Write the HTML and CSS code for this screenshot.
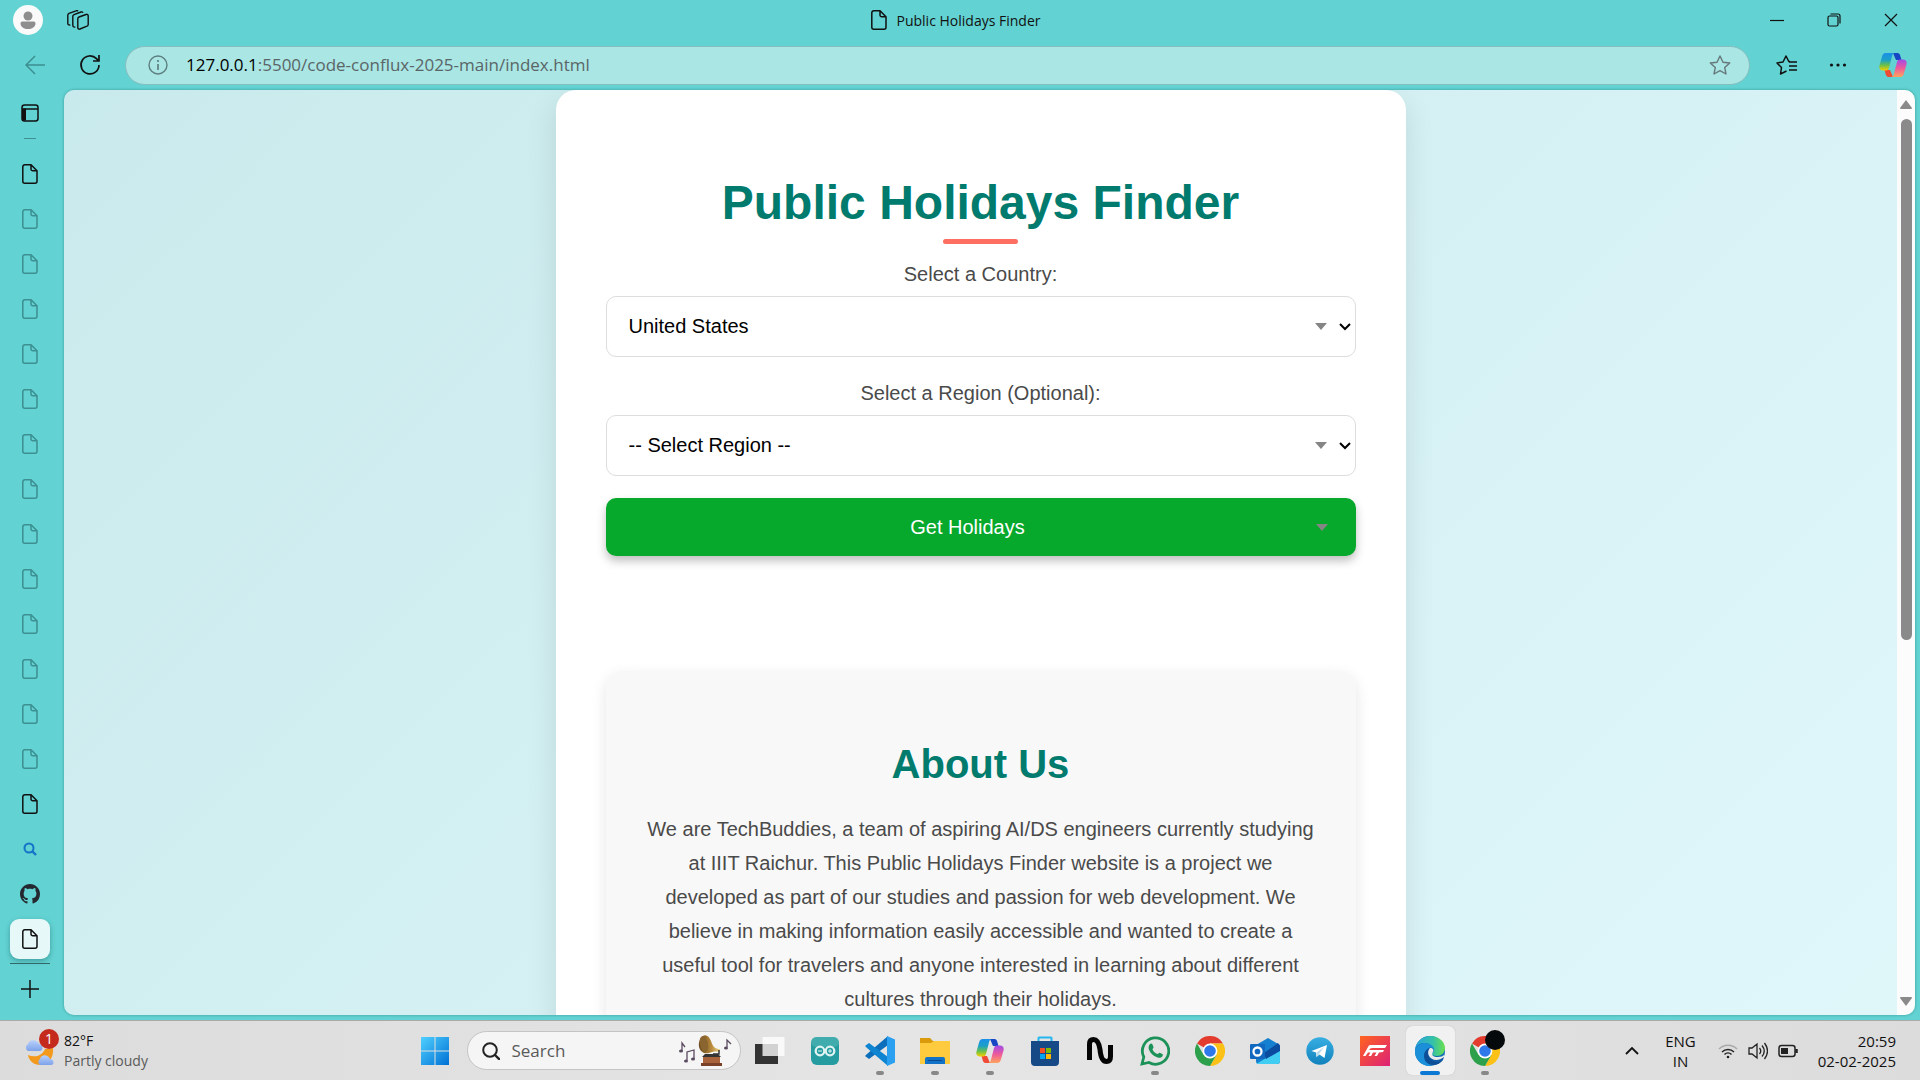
FILE: index.html
```html
<!DOCTYPE html>
<html lang="en">
<head>
<meta charset="utf-8">
<title>Public Holidays Finder</title>
<link rel="stylesheet" href="styles.css">
</head>
<body>
<svg class="defs" aria-hidden="true">
  <defs>
    <symbol id="file" viewBox="0 0 16 20"><path d="M2.8 .8H9l6 6v10.400a2 2 0 0 1-2 2H2.800a2 2 0 0 1-2-2V2.800a2 2 0 0 1 2-2zM9 .8v4.200a1.800 1.800 0 0 0 1.800 1.800H15" fill="none" stroke="currentColor" stroke-width="1.500"/></symbol>
    <linearGradient id="cp1" x1="0" y1="0" x2="0" y2="1"><stop offset="0" stop-color="#1b8fe8"/><stop offset=".4" stop-color="#1ba0c8"/><stop offset=".7" stop-color="#6cc04a"/><stop offset="1" stop-color="#f5d000"/></linearGradient>
    <linearGradient id="cp2" x1="0" y1="0" x2="0" y2="1"><stop offset="0" stop-color="#a04be8"/><stop offset=".5" stop-color="#ee5a9a"/><stop offset="1" stop-color="#ffa45c"/></linearGradient>
    <symbol id="copilot" viewBox="0 0 28 26">
      <path d="M14 1h4.500c1.500 0 2.200 1 2.700 2.500L22.500 8H17z" fill="#1746c4"/>
      <path d="M14 25H9.500c-1.500 0-2.200-1-2.700-2.500L5.500 18H11z" fill="#ee4a35"/>
      <path d="M6.500 1H16c-1.500 0-2.300 1-2.800 2.500L10 16c-.5 1.700-1.500 2.500-3 2.500H4c-3 0-4.300-2.200-3.500-5l2.700-9.500C3.800 2 5 1 6.500 1z" fill="url(#cp1)"/>
      <path d="M21.500 25H12c1.500 0 2.300-1 2.800-2.500L18 10c.5-1.700 1.500-2.500 3-2.500h3c3 0 4.300 2.200 3.500 5L24.800 22c-.6 2-1.800 3-3.300 3z" fill="url(#cp2)"/>
    </symbol>
    <symbol id="chrome" viewBox="0 0 30 30">
      <path d="M15 15 2 7.500A15 15 0 0 1 28 7.500H15z" fill="#e33b2e"/>
      <path d="M15 15l6.500 3.700L15 30A15 15 0 0 0 28 7.500H15z" fill="#fbc116"/>
      <path d="M15 15l6.500 3.700L15 30A15 15 0 0 1 2 7.500l6.500 11.200z" fill="#2da04c"/>
      <circle cx="15" cy="15" r="7.400" fill="#fff"/><circle cx="15" cy="15" r="5.800" fill="#2f78ea"/>
    </symbol>
  </defs>
</svg>

<header class="titlebar">
  <div class="title-left">
    <button class="ghost" aria-label="Profile"><svg width="30" height="30" viewBox="0 0 30 30"><circle cx="15" cy="15" r="15" fill="#fafafa"/><circle cx="15" cy="11" r="4.500" fill="#8e8e8e"/><path d="M9 16.500h12a1.800 1.800 0 0 1 1.500 2c0 3.500-3.500 5.500-7.500 5.500s-7.500-2-7.500-5.500a1.800 1.800 0 0 1 1.500-2z" fill="#8e8e8e"/></svg></button>
    <button class="ghost" aria-label="Workspaces"><svg width="22" height="20" viewBox="0 0 22 20" fill="none" stroke="#111" stroke-width="1.400"><path d="M12 7l7-2.500a1.500 1.500 0 0 1 2.200 1.500v8.500a2 2 0 0 1-1.200 1.700l-7 2.800a1.500 1.500 0 0 1-2.200-1.500V8.800A2 2 0 0 1 12 7z"/><path d="M8.300 17c-1.700.4-2.500-.4-2.500-1.700V6.300A2 2 0 0 1 7 4.600l7-2.600a1.600 1.600 0 0 1 2 .8"/><path d="M3.300 15C1.700 15.300.8 14.500.8 13.300V5A2 2 0 0 1 2 3.300L9 .8a1.700 1.700 0 0 1 2 .4"/></svg></button>
  </div>
  <div class="title"><svg width="16" height="20"><use href="#file"/></svg><span>Public Holidays Finder</span></div>
  <div class="window-buttons">
    <button class="ghost" aria-label="Minimize"><svg width="14" height="14" stroke="#111" stroke-width="1.200"><path d="M0 7.500h14"/></svg></button>
    <button class="ghost" aria-label="Restore"><svg width="14" height="14" fill="none" stroke="#111" stroke-width="1.200"><rect x="1" y="3" width="10" height="10" rx="1.500"/><path d="M3.500 1H11a2 2 0 0 1 2 2v7.500"/></svg></button>
    <button class="ghost" aria-label="Close"><svg width="14" height="14" stroke="#111" stroke-width="1.200"><path d="M1 1l12 12M13 1L1 13"/></svg></button>
  </div>
</header>

<nav class="toolbar">
  <button class="ghost dim" aria-label="Back"><svg width="20" height="20" fill="none" stroke="currentColor" stroke-width="1.500"><path d="M20 10H1M10 1l-9 9 9 9"/></svg></button>
  <button class="ghost" aria-label="Refresh"><svg width="22" height="22" fill="none" stroke="#111" stroke-width="1.700"><path d="M20 11a9 9 0 1 1-2.500-6.300L20 7M20 1v6h-6"/></svg></button>
  <div class="address">
    <svg width="20" height="20" fill="none" stroke="#5f7f80" stroke-width="1.400"><circle cx="10" cy="10" r="9"/><path d="M10 9v6M10 5v2" stroke-width="1.700"/></svg>
    <div class="url"><b>127.0.0.1</b>:5500/code-conflux-2025-main/index.html</div>
    <button class="ghost" aria-label="Favorite"><svg width="22" height="20" viewBox="0 0 22 20" fill="none" stroke="#66787a" stroke-width="1.400" stroke-linejoin="round"><path d="M11 1l3 6.200 6.700.8-5 4.600L17 19l-6-3.300L5 19l1.300-6.400-5-4.600L8 7.200z"/></svg></button>
  </div>
  <div class="toolbar-end">
    <button class="ghost" aria-label="Favorites"><svg width="21" height="20" viewBox="0 0 21 20" fill="none" stroke="#111" stroke-width="1.500" stroke-linejoin="round"><path d="M14 6.500h-1.200L10 1 7 7l-6 1 4.500 4.600L4.500 19l6-3M13 7h8M13 11h8M13 15h8"/></svg></button>
    <button class="ghost" aria-label="Settings and more"><svg width="18" height="6" fill="#111"><circle cx="2.500" cy="3" r="1.600"/><circle cx="9" cy="3" r="1.600"/><circle cx="15.500" cy="3" r="1.600"/></svg></button>
    <button class="ghost" aria-label="Copilot"><svg width="28" height="26"><use href="#copilot"/></svg></button>
  </div>
</nav>

<div class="browser">
  <aside class="tabs">
    <button class="tab panel" aria-label="Tab actions"><svg width="18" height="18" fill="none" stroke="#111" stroke-width="1.500"><rect x="1" y="1" width="16" height="16" rx="2.500"/><path d="M1 5h16"/><path d="M3 4.500v12" stroke-width="4"/></svg></button>
    <hr class="short">
    <button class="tab" aria-label="Tab 1"><svg width="16" height="20"><use href="#file"/></svg></button>
    <button class="tab dim" aria-label="Tab 2"><svg width="16" height="20"><use href="#file"/></svg></button>
    <button class="tab dim" aria-label="Tab 3"><svg width="16" height="20"><use href="#file"/></svg></button>
    <button class="tab dim" aria-label="Tab 4"><svg width="16" height="20"><use href="#file"/></svg></button>
    <button class="tab dim" aria-label="Tab 5"><svg width="16" height="20"><use href="#file"/></svg></button>
    <button class="tab dim" aria-label="Tab 6"><svg width="16" height="20"><use href="#file"/></svg></button>
    <button class="tab dim" aria-label="Tab 7"><svg width="16" height="20"><use href="#file"/></svg></button>
    <button class="tab dim" aria-label="Tab 8"><svg width="16" height="20"><use href="#file"/></svg></button>
    <button class="tab dim" aria-label="Tab 9"><svg width="16" height="20"><use href="#file"/></svg></button>
    <button class="tab dim" aria-label="Tab 10"><svg width="16" height="20"><use href="#file"/></svg></button>
    <button class="tab dim" aria-label="Tab 11"><svg width="16" height="20"><use href="#file"/></svg></button>
    <button class="tab dim" aria-label="Tab 12"><svg width="16" height="20"><use href="#file"/></svg></button>
    <button class="tab dim" aria-label="Tab 13"><svg width="16" height="20"><use href="#file"/></svg></button>
    <button class="tab dim" aria-label="Tab 14"><svg width="16" height="20"><use href="#file"/></svg></button>
    <button class="tab" aria-label="Tab 15"><svg width="16" height="20"><use href="#file"/></svg></button>
    <button class="tab" aria-label="Search tab"><svg width="14" height="14" fill="none" stroke="#1473c8" stroke-width="2"><circle cx="6" cy="6" r="4.500"/><path d="M9 9l4 4" stroke-width="2.400"/></svg></button>
    <button class="tab" aria-label="GitHub tab"><svg width="20" height="20" viewBox="0 0 16 16" fill="#24292f"><path d="M8 0C3.580 0 0 3.580 0 8c0 3.540 2.290 6.530 5.470 7.590.4.070.55-.17.55-.38 0-.19-.01-.82-.01-1.490-2.010.37-2.530-.49-2.690-.94-.09-.23-.48-.94-.82-1.130-.28-.15-.68-.52-.01-.53.63-.01 1.080.58 1.230.82.72 1.210 1.870.87 2.330.66.070-.52.28-.87.51-1.070-1.780-.2-3.640-.89-3.640-3.950 0-.87.31-1.590.82-2.150-.08-.2-.36-1.020.080-2.120 0 0 .67-.21 2.200.82.640-.18 1.320-.27 2-.27s1.360.09 2 .27c1.530-1.040 2.200-.82 2.200-.82.44 1.100.16 1.920.080 2.120.51.56.82 1.270.82 2.150 0 3.070-1.870 3.750-3.650 3.950.29.25.54.73.54 1.480 0 1.070-.01 1.930-.01 2.200 0 .21.15.46.55.38A8.010 8.010 0 0 0 16 8c0-4.420-3.580-8-8-8z"/></svg></button>
    <button class="tab active" aria-label="Public Holidays Finder"><span><svg width="16" height="20"><use href="#file"/></svg></span></button>
    <hr class="long">
    <button class="tab" aria-label="New tab"><svg width="18" height="18" stroke="#111" stroke-width="1.500"><path d="M9 0v18M0 9h18"/></svg></button>
  </aside>

  <div class="viewport">
    <main class="page">
      <div class="container">
        <h1>Public Holidays Finder</h1>
        <form class="finder">
          <label for="country">Select a Country:</label>
          <div class="field">
            <select id="country"><option>United States</option></select>
            <svg class="arrows" width="36" height="8"><path d="M0 0h12L6 7z" fill="#858585"/><path d="M25 1l5 5 5-5" fill="none" stroke="#000" stroke-width="2"/></svg>
          </div>
          <label for="region">Select a Region (Optional):</label>
          <div class="field">
            <select id="region"><option>-- Select Region --</option></select>
            <svg class="arrows" width="36" height="8"><path d="M0 0h12L6 7z" fill="#858585"/><path d="M25 1l5 5 5-5" fill="none" stroke="#000" stroke-width="2"/></svg>
          </div>
          <button class="submit" type="button"><span>Get Holidays</span><svg width="12" height="7"><path d="M0 0h12L6 7z" fill="#858585"/></svg></button>
        </form>
        <section class="about">
          <h2>About Us</h2>
          <p>We are TechBuddies, a team of aspiring AI/DS engineers currently studying at IIIT Raichur. This Public Holidays Finder website is a project we developed as part of our studies and passion for web development. We believe in making information easily accessible and wanted to create a useful tool for travelers and anyone interested in learning about different cultures through their holidays.</p>
        </section>
      </div>
    </main>
    <div class="scrollbar">
      <svg width="12" height="9" fill="#8a8a8a"><path d="M6 0l6 8q0 1-1 1H1q-1 0-1-1z"/></svg>
      <div class="track"><div class="thumb"></div></div>
      <svg width="12" height="9" fill="#8a8a8a"><path d="M6 9l6-8q0-1-1-1H1Q0 0 0 1z"/></svg>
    </div>
  </div>
</div>

<footer class="taskbar">
  <div class="weather">
    <svg width="36" height="36" viewBox="0 0 36 36"><defs><linearGradient id="cl" x1="0" y1="0" x2="0" y2="1"><stop offset="0" stop-color="#b8d2fb"/><stop offset="1" stop-color="#7ea2ea"/></linearGradient></defs><path d="M4 22c7 3 14 1 17-6l8-1c1 9-4 17-13 17-6 0-11-4-12-10z" fill="#f39a1c"/><path d="M4 18a4 4 0 0 1 0-7c1-4 8-6 11 0 4 0 5 6 1 7z" fill="url(#cl)"/><path d="M16 32a3.500 3.500 0 0 1 0-6c1-5 8-5 10 0 4 0 5 6 1 6z" fill="url(#cl)"/></svg>
    <span class="badge">1</span>
    <div><div>82°F</div><div class="muted">Partly cloudy</div></div>
  </div>
  <div class="apps">
    <button class="app" aria-label="Start"><svg width="30" height="30"><defs><linearGradient id="win" x1="0" y1="0" x2="1" y2="1"><stop offset="0" stop-color="#4fd0ff"/><stop offset="1" stop-color="#0070d4"/></linearGradient></defs><path d="M1 1h13.500v13.500H1zM15.500 1H29v13.500H15.500zM1 15.500h13.500V29H1zM15.500 15.500H29V29H15.500z" fill="url(#win)"/></svg></button>
    <div class="search">
      <svg width="18" height="18" fill="none" stroke="#222" stroke-width="2"><circle cx="8" cy="8" r="6.800"/><path d="M13 13l5 5" stroke-width="2.400"/></svg>
      <input type="search" placeholder="Search" aria-label="Search">
      <svg width="54" height="34" viewBox="0 0 54 34"><defs><linearGradient id="horn"><stop offset="0" stop-color="#6b4a20"/><stop offset=".6" stop-color="#b98a3c"/><stop offset="1" stop-color="#f0d488"/></linearGradient></defs><g fill="none" stroke="#594a60" stroke-width="1.300"><path d="M4 17V9l3 4M9 26v-8l7-2v9M49 13V6l4 4"/></g><g fill="#594a60"><ellipse cx="3" cy="17" rx="2" ry="1.500"/><ellipse cx="8" cy="27" rx="2" ry="1.500"/><ellipse cx="15" cy="25" rx="2" ry="1.500"/><ellipse cx="48" cy="14" rx="2" ry="1.500"/></g><path d="M23 4c3-5 8-3 10 3 2 6 4 8 9 8l-1 3c-4-1-7 0-10 1-9 2-13-8-8-15z" fill="url(#horn)"/><ellipse cx="26" cy="10" rx="4" ry="8" fill="#8a6530" transform="rotate(-14 26 10)"/><path d="M41 16v4h-6" stroke="#333" stroke-width="1.500" fill="none"/><path d="M27 20h13l3 3H24z" fill="#343434"/><path d="M25 23h17v6H25z" fill="#a8633c"/><path d="M23 29h21v3H23z" fill="#7a4128"/></svg>
    </div>
    <button class="app" aria-label="Task view"><svg width="30" height="30"><path d="M0 8h23v20H0z" fill="#333"/><path d="M7.500 1H29.500v19H7.500z" fill="#fff" opacity=".78"/></svg></button>
    <button class="app" aria-label="Arduino"><svg width="30" height="30"><rect x="1" y="1" width="28" height="28" rx="6" fill="#259da0"/><rect x="1" y="1" width="28" height="10" rx="5" fill="#55b5b5" opacity=".6"/><g fill="none" stroke="#dff3f2" stroke-width="2.300"><circle cx="10" cy="15" r="4.300"/><circle cx="20" cy="15" r="4.300"/></g><path d="M8 15h4M18 15h4M20 13v4" stroke="#dff3f2"/></svg></button>
    <button class="app running" aria-label="Visual Studio Code"><svg width="30" height="30"><path d="M23 9L4 23l-4-3 2-2L23 0z" fill="#0d6fbb"/><path d="M23 21L4 7 0 10l2 2 21 18z" fill="#0f85d2"/><path d="M22 0l8 3.500v23L22 30z" fill="#2ba0f0"/></svg></button>
    <button class="app running" aria-label="File Explorer"><svg width="30" height="30"><path d="M0 2h10l3 3h17v8H0z" fill="#d99a0c"/><path d="M0 7h11l3-2h16v23H0z" fill="#fecb3e"/><path d="M5 28v-5q0-2 2-2h16q2 0 2 2v5z" fill="#1272c6"/><path d="M8 24.500h14" stroke="#0a4a90"/></svg></button>
    <button class="app running" aria-label="Copilot"><svg width="28" height="26"><use href="#copilot"/></svg></button>
    <button class="app" aria-label="Microsoft Store"><svg width="30" height="30"><path d="M8.500 6V2q0-.5.500-.5h12q.5 0 .5.500v4" fill="none" stroke="#25b7ee" stroke-width="2"/><path d="M1 5h28v21q0 4-4 4H5q-4 0-4-4z" fill="#164a86"/><path d="M10 12h5v5h-5z" fill="#f25022"/><path d="M16 12h5v5h-5z" fill="#7fba00"/><path d="M10 18h5v5h-5z" fill="#00a4ef"/><path d="M16 18h5v5h-5z" fill="#ffb900"/></svg></button>
    <button class="app" aria-label="Nothing"><svg width="28" height="30" fill="none" stroke="#050505" stroke-width="5"><path d="M3.500 24V8q0-4.500 4-4.500 5 0 6.500 10 1 12 6.500 12 4 0 4-5V9"/></svg></button>
    <button class="app running" aria-label="WhatsApp"><svg width="30" height="30"><path d="M2 28l1.800-7A13.200 13.200 0 1 1 9 26.500z" fill="none" stroke="#1c9258" stroke-width="2.800"/><path d="M10 8c1-1 2-.5 2.500.5l1 2.500c.2.800-1 2-1 2.500 1 2 2.500 3.500 5 4.500.6 0 1.500-1.500 2.200-1.300l2.600 1.300c1 .5.500 1.700 0 2.400-1.300 1.600-3.300 1.600-5.300.8-4-1.500-6.500-4-8-7.500-.8-2-.5-4.200 1-5.700z" fill="#1c9258"/></svg></button>
    <button class="app" aria-label="Chrome"><svg width="30" height="30"><use href="#chrome"/></svg></button>
    <button class="app" aria-label="Outlook"><svg width="30" height="28"><path d="M6 8L18 1l12 7v16q0 3-3 3H9q-3 0-3-3z" fill="#1580cf"/><path d="M6 27l24-14v11q0 3-3 3z" fill="#42cdf2"/><path d="M14 16L28 6l2 3v5l-14 8z" fill="#0b4ba0"/><rect y="7" width="15" height="15" rx="1" fill="#1068bf"/><circle cx="7.500" cy="14.500" r="4" fill="none" stroke="#fff" stroke-width="2.300"/></svg></button>
    <button class="app" aria-label="Telegram"><svg width="28" height="28"><defs><linearGradient id="tg" x1="0" y1="0" x2="0" y2="1"><stop offset="0" stop-color="#37aee2"/><stop offset="1" stop-color="#1282bd"/></linearGradient></defs><circle cx="14" cy="14" r="13.700" fill="url(#tg)"/><path d="M5.500 14L21 8l-2.500 13-5-3.500-3 2.500-.5-4.500z" fill="#fff"/><path d="M10.500 20v-4.500L18 10l-5 7z" fill="#b8d9ea"/></svg></button>
    <button class="app" aria-label="Forza"><svg width="30" height="30"><defs><linearGradient id="fz" x1="0" y1="0" x2="1" y2="1"><stop offset="0" stop-color="#ff641f"/><stop offset="1" stop-color="#dc2178"/></linearGradient></defs><path d="M0 0h30v30H0z" fill="url(#fz)"/><path d="M10 9h17l-2 3H12q-2 0-3 2h15l-1 2-4 .5-2 3.500h-2.500l2-3.500H13L11 20H8.500l2-3.500H8L5.500 20H3l5-9q1-2 2-2z" fill="#fff"/></svg></button>
    <button class="app current" aria-label="Edge"><svg width="30" height="30"><defs><linearGradient id="eg"><stop offset="0" stop-color="#2aa4dd"/><stop offset=".6" stop-color="#35c1a8"/><stop offset="1" stop-color="#6be04e"/></linearGradient></defs><circle cx="15" cy="15" r="15" fill="#0f6db8"/><path d="M0 14C1 5 8 0 15 0c9 0 15 6 15 12 0 5-4 8-8 8-3 0-5-1-5-2s2-1 2-4c0-4-5-7-10-7-5 0-8 3-9 7z" fill="url(#eg)"/><path d="M0 14c2-5 6-7 10-7 5 0 9 3 9 7-1-2-3-3-5-2-5 2-5 11 2 16 0 0 2 2-3 2C5 29-1 22 0 14z" fill="#1b8fd8"/><path d="M9 20c0 6 5 9 9 9s8-2 10-5c-5 2-12 1-14-4-2-4 0-7 1-8-4 1-6 4-6 8z" fill="#0d4f97"/><path d="M15 12c3 0 4 2 3 4-2 3 0 5 5 5 3 0 5-1 6-2l1 2-2 3c-5 2-12 1-14-4-1.500-3-1-6 1-8z" fill="#ececec"/><path d="M14 20c2 4 9 6 15 1-.5 2-1 3-1.500 3.500C22 28 15 25 14 20z" fill="#125ba6"/></svg></button>
    <button class="app running" aria-label="Chrome profile"><svg width="42" height="42" viewBox="-6 -6 42 42"><use href="#chrome" width="30" height="30"/><circle cx="25" cy="4" r="10" fill="#06090c"/></svg></button>
  </div>
  <div class="tray">
    <svg width="14" height="10" fill="none" stroke="#111" stroke-width="1.800"><path d="M1 8l6-6 6 6"/></svg>
    <div class="lang">ENG<br>IN</div>
    <div class="status">
      <svg width="20" height="16" fill="none" stroke="#222" stroke-width="1.500"><path d="M1 6a12.500 12.500 0 0 1 18 0" stroke="#aaa"/><path d="M4 9a8.500 8.500 0 0 1 12 0M6.500 11.500a5 5 0 0 1 7 0"/><circle cx="10" cy="14" r="1.300" fill="#222" stroke="none"/></svg>
      <svg width="20" height="18" fill="none" stroke="#222" stroke-width="1.300"><path d="M1 6h3l5-4v14l-5-4H1zM11.500 6q2.500 3 0 6M14 3.500q4.500 5.500 0 11M16.500 1q6 8 0 16"/></svg>
      <svg width="20" height="14" fill="none" stroke="#222" stroke-width="1.500"><rect x="1" y="1.500" width="16" height="11" rx="2.500"/><path d="M18.500 5v4" stroke-width="2.500"/><path d="M3 4h7v6H3z" fill="#222" stroke="none"/></svg>
    </div>
    <div class="clock">20:59<br>02-02-2025</div>
  </div>
</footer>
</body>
</html>
```
FILE: styles.css
```css
* {
  box-sizing: border-box;
}

body {
  margin: 0;
  height: 100vh;
  overflow: hidden;
  display: flex;
  flex-direction: column;
  background: #62d2d2;
  font-family: "Open Sans", "Noto Sans", sans-serif;
  font-size: 14px;
  color: #111;
}

button,
input,
select {
  font: inherit;
}

svg {
  display: block;
  flex: none;
}

.defs {
  position: absolute;
  width: 0;
  height: 0;
}

.ghost,
.tab,
.app {
  display: flex;
  align-items: center;
  justify-content: center;
  padding: 0;
  border: 0;
  background: none;
  color: #111;
}

/* Title bar */
.titlebar {
  display: grid;
  grid-template-columns: 1fr auto 1fr;
  align-items: center;
  height: 40px;
  padding: 0 22px 0 13px;
}

.title-left {
  display: flex;
  gap: 24px;
}

.title {
  display: flex;
  align-items: center;
  gap: 10px;
}

.window-buttons {
  display: flex;
  justify-content: flex-end;
  gap: 43px;
}

/* Toolbar */
.toolbar {
  display: flex;
  align-items: center;
  height: 50px;
  padding: 0 13px 0 25px;
  gap: 34px;
}

.toolbar .dim {
  color: #3d8f91;
}

.toolbar-end {
  display: flex;
  align-items: center;
  gap: 32px;
  margin-left: -8px;
}

.address {
  flex: 1;
  display: flex;
  align-items: center;
  gap: 18px;
  height: 39px;
  padding: 0 18px 0 22px;
  margin-left: -10px;
  border: 1px solid #86bdbd;
  border-radius: 20px;
  background: #a9e6e4;
  font-size: 17px;
  line-height: 22px;
  color: #5b6566;
}

.address b {
  font-weight: 400;
  color: #000;
}

.url {
  flex: 1;
}

/* Side tabs and page */
.browser {
  flex: 1;
  min-height: 0;
  display: flex;
  padding: 0 5px 5px 0;
}

.tabs {
  width: 64px;
  padding-right: 4px;
  display: flex;
  flex-direction: column;
  align-items: center;
}

.tab {
  width: 45px;
  height: 45px;
  flex: none;
}

.tab.dim {
  color: #3d8f91;
}

.tabs hr {
  flex: none;
  border: 0;
}

.short {
  width: 12px;
  height: 1px;
  margin: 3px 0 12px;
  background: #3d8f91;
}

.long {
  width: 40px;
  height: 1px;
  margin: 2px 0;
  background: #32686a;
}

.active span {
  display: grid;
  place-items: center;
  width: 40px;
  height: 40px;
  border-radius: 9px;
  background: #e6f8f8;
  box-shadow: 0 2px 5px rgba(0, 60, 60, .35);
}

.viewport {
  flex: 1;
  min-width: 0;
  display: flex;
  overflow: hidden;
  border-radius: 10px;
  box-shadow: 0 0 3px rgba(0, 70, 70, .4);
}

.page {
  flex: 1;
  overflow: hidden;
  background: linear-gradient(135deg, #c9eaec, #e0f7fa);
  font-family: "Liberation Sans", Arial, sans-serif;
  font-size: 20px;
  color: #4a4a4a;
}

.container {
  max-width: 850px;
  margin: 0 auto;
  padding: 84px 50px 50px;
  border-radius: 20px;
  background: #fff;
  box-shadow: 0 10px 30px rgba(0, 0, 0, .1);
  text-align: center;
}

h1 {
  margin: 0 0 16px;
  font-size: 48px;
  line-height: 58px;
  color: #007b6e;
}

h1::after {
  content: "";
  display: block;
  width: 75px;
  height: 5px;
  margin: 7px auto 0;
  border-radius: 3px;
  background: #ff6f61;
}

.finder {
  display: flex;
  flex-direction: column;
}

.finder label {
  margin-bottom: 8px;
  line-height: 28px;
}

.field {
  position: relative;
  margin-bottom: 22px;
}

.field select {
  appearance: none;
  display: block;
  width: 100%;
  height: 61px;
  padding: 0 22px 2px;
  border: 1px solid #ddd;
  border-radius: 10px;
  background: #fff;
  color: #000;
}

.arrows {
  position: absolute;
  right: 5px;
  top: 27px;
  pointer-events: none;
}

.submit {
  display: flex;
  align-items: center;
  height: 58px;
  padding: 0 28px 0 14px;
  border: 0;
  border-radius: 10px;
  background: #06a92c;
  color: #fff;
  box-shadow: 0 5px 10px rgba(0, 0, 0, .25);
}

.submit span {
  flex: 1;
}

.about {
  margin-top: 115px;
  padding: 70px 40px 40px;
  border-radius: 16px;
  background: #f8f8f8;
  box-shadow: 0 5px 15px rgba(0, 0, 0, .1);
}

h2 {
  margin: 0 0 25px;
  font-size: 40px;
  line-height: 46px;
  color: #007b6e;
}

.about p {
  margin: 0;
  line-height: 34px;
}

.scrollbar {
  width: 18px;
  display: flex;
  flex-direction: column;
  align-items: center;
  padding: 10px 0 9px;
  background: #fcfcfc;
}

.track {
  flex: 1;
  padding: 10px 0;
}

.thumb {
  width: 11px;
  height: 60%;
  border-radius: 6px;
  background: #8a8a8a;
}

/* Taskbar */
.taskbar {
  display: grid;
  grid-template-columns: 1fr auto 1fr;
  align-items: center;
  height: 60px;
  border-top: 1px solid #aaa;
  background: linear-gradient(90deg, #dcdcdc, #e5e5e5 50%, #dcdcdc);
  line-height: 20px;
}

.weather {
  position: relative;
  display: flex;
  align-items: center;
  gap: 4px;
  padding-left: 24px;
}

.badge {
  position: absolute;
  left: 39px;
  top: -2px;
  width: 20px;
  border-radius: 10px;
  background: #c42b1c;
  color: #fff;
  text-align: center;
}

.muted {
  color: #5a5a5a;
}

.apps {
  display: flex;
  align-items: center;
}

.app {
  position: relative;
  width: 55px;
  height: 58px;
}

.current {
  z-index: 0;
}

.current::before {
  content: "";
  position: absolute;
  z-index: -1;
  inset: 4px 3px 5px;
  border-radius: 6px;
  background: #f1f1f1;
  box-shadow: 0 0 1px #aaa;
}

.running::after,
.current::after {
  content: "";
  position: absolute;
  bottom: 5px;
  width: 8px;
  height: 4px;
  border-radius: 2px;
  background: #888;
}

.current::after {
  width: 20px;
  background: #0a78d4;
}

.search {
  display: flex;
  align-items: center;
  gap: 12px;
  width: 274px;
  height: 39px;
  margin: 0 2px 0 4px;
  padding: 0 8px 0 14px;
  border: 1px solid #c4c4c4;
  border-radius: 20px;
  background: #f5f5f5;
}

.search input {
  flex: 1;
  min-width: 0;
  padding: 0;
  border: 0;
  background: none;
  font-size: 17px;
}

.search input::placeholder {
  color: #5a5a5a;
}

.tray {
  display: flex;
  justify-content: flex-end;
  align-items: center;
  padding-right: 24px;
  font-size: 15px;
}

.lang {
  margin: 0 22px 0 26px;
  text-align: center;
}

.status {
  display: flex;
  align-items: center;
  gap: 10px;
  margin-right: 20px;
}

.clock {
  text-align: right;
}
```
